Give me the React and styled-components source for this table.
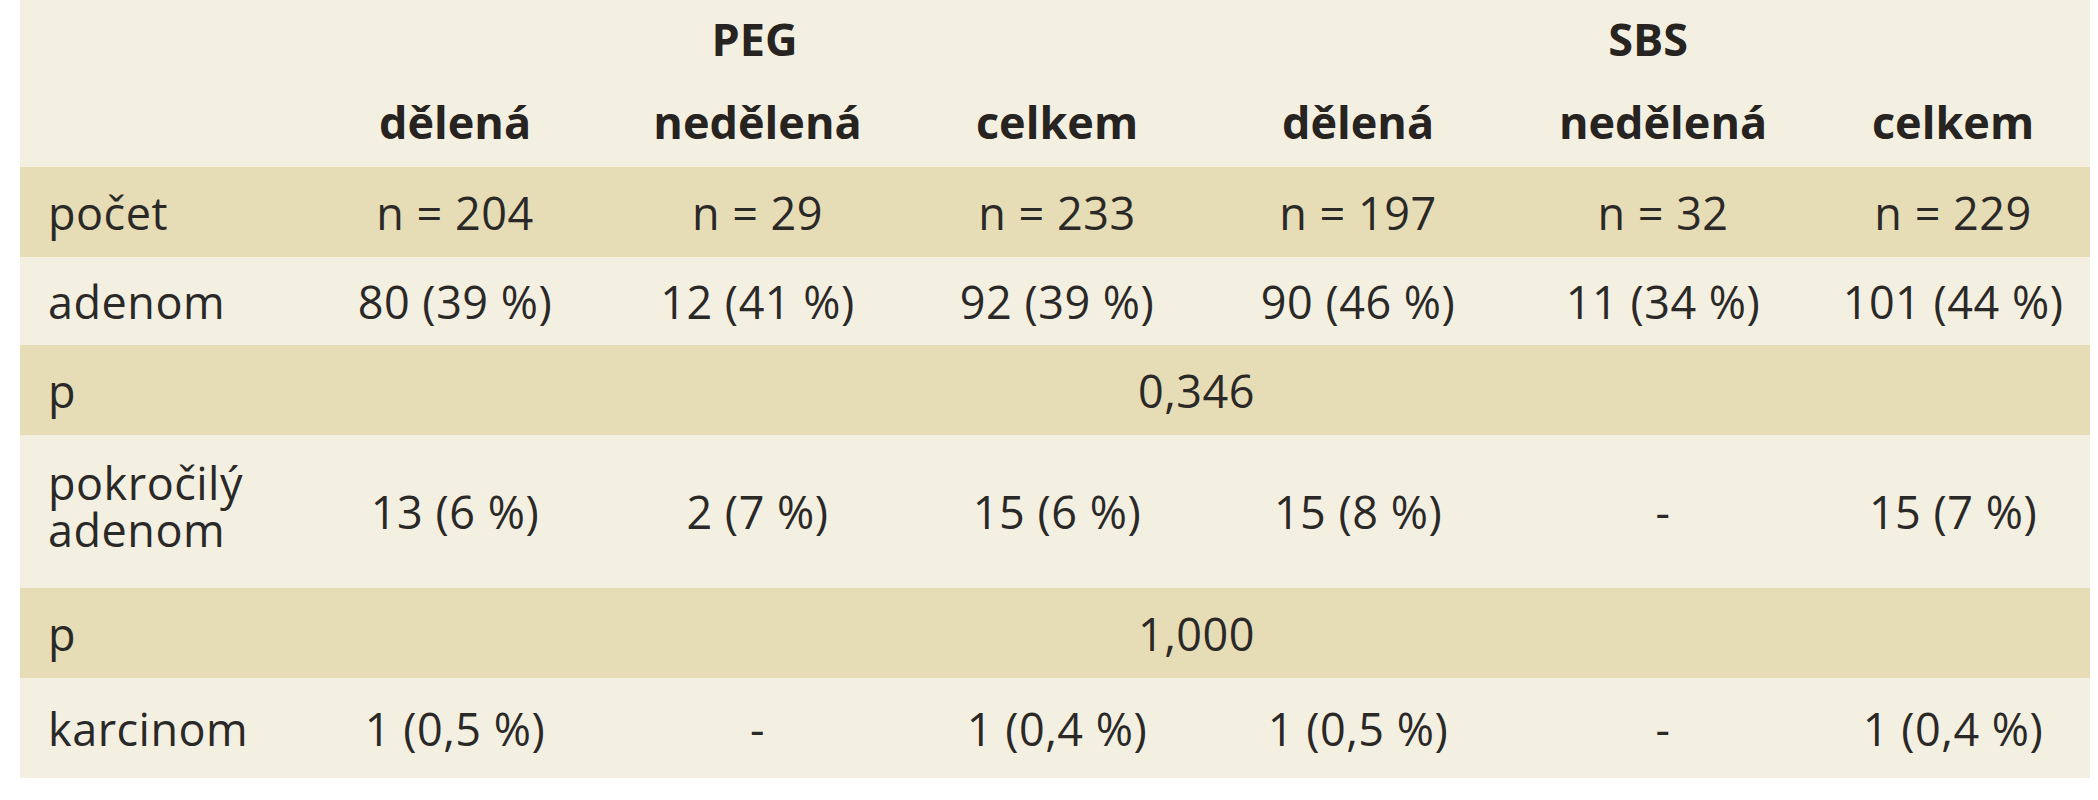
import React from 'react'
import styled, { createGlobalStyle } from 'styled-components'

const GlobalStyle = createGlobalStyle`
    html, body {
        margin: 0;
        padding: 0;
        background: #ffffff;
    }
    body {
        font-family: "Open Sans", "Noto Sans", sans-serif;
    }
`

const Page = styled.div`
    width: 2098px;
    height: 800px;
    padding-left: 20px;
    box-sizing: border-box;
    background: #ffffff;
`

const Table = styled.table`
    width: 2070px;
    border-collapse: collapse;
    table-layout: fixed;
    color: #2b2927;
    font-size: 45px;
    letter-spacing: 0.5px;
`

const Row = styled.tr`
    height: ${p => p.$h}px;
    background: ${p => (p.$shade ? '#e6ddb6' : '#f3f0e2')};
`

const HeadCell = styled.th`
    font-weight: 700;
    text-align: center;
    vertical-align: middle;
    padding: 0;
    color: #262321;
    letter-spacing: 0;
`

const Label = styled.td`
    text-align: left;
    padding: 0 0 ${p => (p.$lift ? 12 : 0)}px 28px;
    line-height: 47px;
    vertical-align: middle;
`

const Cell = styled.td`
    text-align: center;
    padding: 0;
    vertical-align: middle;
`

const cols = [283, 304, 301, 298, 304, 306, 274]

const rows = [
    { label: 'počet', h: 90, shade: true, values: ['n = 204', 'n = 29', 'n = 233', 'n = 197', 'n = 32', 'n = 229'] },
    { label: 'adenom', h: 88, values: ['80 (39 %)', '12 (41 %)', '92 (39 %)', '90 (46 %)', '11 (34 %)', '101 (44 %)'] },
    { label: 'p', h: 90, shade: true, pValue: '0,346' },
    { label: <>pokročilý<br />adenom</>, lift: true, h: 153, values: ['13 (6 %)', '2 (7 %)', '15 (6 %)', '15 (8 %)', '-', '15 (7 %)'] },
    { label: 'p', h: 90, shade: true, pValue: '1,000' },
    { label: 'karcinom', h: 100, values: ['1 (0,5 %)', '-', '1 (0,4 %)', '1 (0,5 %)', '-', '1 (0,4 %)'] },
]

const subHeads = ['dělená', 'nedělená', 'celkem', 'dělená', 'nedělená', 'celkem']

export const App = () => {
    return (
        <Page>
            <GlobalStyle />
            <Table>
                <colgroup>
                    {cols.map((w, i) => <col key={i} style={{ width: w }} />)}
                </colgroup>
                <thead>
                    <Row $h={76}>
                        <HeadCell />
                        <HeadCell colSpan={3}>PEG</HeadCell>
                        <HeadCell colSpan={3}>SBS</HeadCell>
                    </Row>
                    <Row $h={91}>
                        <HeadCell />
                        {subHeads.map((s, i) => <HeadCell key={i}>{s}</HeadCell>)}
                    </Row>
                </thead>
                <tbody>
                    {rows.map((r, i) => (
                        <Row key={i} $h={r.h} $shade={r.shade}>
                            <Label $lift={r.lift}>{r.label}</Label>
                            {r.pValue
                                ? <Cell colSpan={6}>{r.pValue}</Cell>
                                : r.values.map((v, j) => <Cell key={j}>{v}</Cell>)}
                        </Row>
                    ))}
                </tbody>
            </Table>
        </Page>
    )
}

export default App
